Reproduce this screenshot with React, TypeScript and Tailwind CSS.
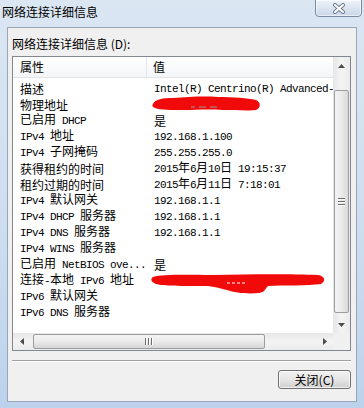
import React from 'react';

const rows: [string, string][] = [
  ['描述', 'Intel(R) Centrino(R) Advanced-'],
  ['物理地址', ''],
  ['已启用 DHCP', '是'],
  ['IPv4 地址', '192.168.1.100'],
  ['IPv4 子网掩码', '255.255.255.0'],
  ['获得租约的时间', '2015年6月10日 19:15:37'],
  ['租约过期的时间', '2015年6月11日 7:18:01'],
  ['IPv4 默认网关', '192.168.1.1'],
  ['IPv4 DHCP 服务器', '192.168.1.1'],
  ['IPv4 DNS 服务器', '192.168.1.1'],
  ['IPv4 WINS 服务器', ''],
  ['已启用 NetBIOS ove...', '是'],
  ['连接-本地 IPv6 地址', ''],
  ['IPv6 默认网关', ''],
  ['IPv6 DNS 服务器', ''],
];

// SimSun-like mix: half-width latin (6px) and full-width CJK (12px)
const Mixed: React.FC<{ text: string }> = ({ text }) => {
  const parts = text.match(/[\x20-\x7e]+|[^\x20-\x7e]+/g) || [];
  return (
    <>
      {parts.map((p, i) =>
        /^[\x20-\x7e]+$/.test(p) ? (
          <span key={i} className="font-['Liberation_Mono',monospace] text-[11px] tracking-[-0.6px] leading-[15px] whitespace-pre">
            {p}
          </span>
        ) : (
          <span key={i} className="font-['Noto_Sans_CJK_SC',sans-serif] text-[12px] leading-[15px]">
            {p}
          </span>
        )
      )}
    </>
  );
};

const Arrow: React.FC<{ dir: 'up' | 'down' | 'left' | 'right' }> = ({ dir }) => {
  const pts = {
    up: '0,4 3.5,0 7,4',
    down: '0,0 3.5,4 7,0',
    left: '4,0 0,3.5 4,7',
    right: '0,0 4,3.5 0,7',
  }[dir];
  const w = dir === 'up' || dir === 'down' ? 7 : 4;
  const h = dir === 'up' || dir === 'down' ? 4 : 7;
  return (
    <svg width={w} height={h} viewBox={`0 0 ${w} ${h}`}>
      <polygon points={pts} fill="#4d4d4d" />
    </svg>
  );
};

const Grip: React.FC<{ vertical?: boolean }> = ({ vertical }) => (
  <div className={vertical ? 'flex flex-col gap-[1px]' : 'flex gap-[1px]'}>
    {[0, 1, 2].map((i) => (
      <div
        key={i}
        className={vertical ? 'w-[7px] h-[1px] bg-[#6c6c6c] border-b border-white box-content' : 'h-[7px] w-[1px] bg-[#6c6c6c] border-r border-white box-content'}
      />
    ))}
  </div>
);

const Scribbles = () => (
  <svg className="absolute left-0 top-0 pointer-events-none" width="320" height="276" viewBox="0 0 320 276">
    {/* row 2 value (coords relative to listbox inner at x=13,y=57) */}
    <path
      d="M140 47 C142 42 150 41 160 41 C175 40 190 39 205 40 C220 40 235 41 243 43 C248 45 248 51 243 53 C235 54 222 53 210 53 C195 52 182 53 170 53 C158 53 148 53 142 51 C139 50 139 48 140 47 Z"
      fill="#f00a0a"
    />
    <path d="M178 50 L182 50 M186 50 L193 50 M197 50 L204 50" stroke="#9a9a9a" strokeWidth="1" />
    {/* row 13 value */}
    <path
      d="M140 220 C150 217 175 218 200 218 C240 217 280 217 305 218 C312 219 313 224 308 227 C295 229 270 228 255 229 C252 232 252 235 246 236 C235 237 222 236 214 233 C205 231 200 229 190 229 C170 229 150 229 143 227 C138 225 137 222 140 220 Z"
      fill="#f00a0a"
    />
    <path d="M214 226 L232 226" stroke="#ffffff" strokeWidth="1" strokeDasharray="3 2" />
  </svg>
);

const ListBox = () => (
  <div className="w-[339px] h-[295px] border border-[#828790] bg-white flex flex-col">
    <div className="flex flex-1 min-h-0">
      {/* main area */}
      <div className="w-[320px] flex flex-col relative overflow-hidden">
        <div className="h-[21px] flex bg-gradient-to-b from-white to-[#f4f5f7] border-b border-[#e0e3e8] shrink-0">
          <div className="w-[134px] border-r border-[#e3e6ea] pl-[7px] flex items-center">
            <span className="font-['Noto_Sans_CJK_SC',sans-serif] text-[12px] leading-[16px] text-black">属性</span>
          </div>
          <div className="flex-1 pl-[6px] flex items-center">
            <span className="font-['Noto_Sans_CJK_SC',sans-serif] text-[12px] leading-[16px] text-black">值</span>
          </div>
        </div>
        <div className="pt-[2px] flex flex-col">
          {rows.map(([k, v], i) => (
            <div key={i} className="h-[16px] flex items-center text-black">
              <div className="w-[135px] pl-[7px] whitespace-nowrap overflow-hidden leading-[15px]">
                <Mixed text={k} />
              </div>
              <div className="flex-1 pl-[6px] whitespace-nowrap overflow-hidden leading-[15px]">
                <Mixed text={v} />
              </div>
            </div>
          ))}
        </div>
        <Scribbles />
      </div>
      {/* vertical scrollbar */}
      <div className="w-[17px] flex flex-col bg-gradient-to-r from-[#e6e6e6] via-[#f4f4f4] to-[#ebebeb]">
        <div className="h-[17px] flex items-center justify-center">
          <Arrow dir="up" />
        </div>
        <div className="flex-1 flex flex-col pt-[16px]">
          <div className="h-[223px] mx-[1px] rounded-[2px] border border-[#9c9c9c] bg-gradient-to-r from-[#f3f3f3] via-[#ebebeb] to-[#d9d9d9] flex items-center justify-center">
            <Grip vertical />
          </div>
        </div>
        <div className="h-[17px] flex items-center justify-center">
          <Arrow dir="down" />
        </div>
      </div>
    </div>
    {/* horizontal scrollbar */}
    <div className="h-[17px] flex shrink-0">
      <div className="w-[320px] flex bg-gradient-to-b from-[#e6e6e6] via-[#f4f4f4] to-[#ebebeb]">
        <div className="w-[17px] flex items-center justify-center">
          <Arrow dir="left" />
        </div>
        <div className="flex-1 flex items-stretch pl-[3px] py-[1px]">
          <div className="w-[232px] rounded-[2px] border border-[#9c9c9c] bg-gradient-to-b from-[#f3f3f3] via-[#ebebeb] to-[#d6d6d6] flex items-center justify-center">
            <Grip />
          </div>
        </div>
        <div className="w-[17px] flex items-center justify-center">
          <Arrow dir="right" />
        </div>
      </div>
      <div className="w-[17px] bg-[#f0f0f0]" />
    </div>
  </div>
);

const CloseX = () => (
  <svg width="14" height="11" viewBox="0 0 14 11">
    <path d="M3 2 L11 9 M11 2 L3 9" stroke="#6f7c8e" strokeWidth="4" strokeLinecap="round" />
    <path d="M3 2 L11 9 M11 2 L3 9" stroke="#ffffff" strokeWidth="2" strokeLinecap="round" />
  </svg>
);

export default function App() {
  return (
    <div className="w-[364px] h-[408px] flex flex-col overflow-hidden bg-gradient-to-b from-[#dbe6f3] via-[#cfdff0] to-[#bcd2ec]">
      <div className="h-[27px] flex items-start justify-between shrink-0">
        <span className="pl-[2px] pt-[3px] font-['Noto_Sans_CJK_SC',sans-serif] text-[12px] leading-[18px] text-black">
          网络连接详细信息
        </span>
        <div className="mr-[2px] w-[47px] h-[18px] -mt-[1px] rounded-b-[4px] border border-[#7a8aa0] bg-gradient-to-b from-[#eef3f9] to-[#c9d7e9] flex items-center justify-center shadow-[inset_0_0_0_1px_rgba(255,255,255,0.6)]">
          <CloseX />
        </div>
      </div>
      <div className="flex-1 mx-[7px] mb-[6px] bg-[#f0f0f0] border border-[#98a6b8] flex flex-col pl-[4px] pt-[8px]">
        <div className="h-[16px] leading-[16px] font-['Noto_Sans_CJK_SC',sans-serif] text-[12px] text-black">
          网络连接详细信息 (D):
        </div>
        <div className="mt-[4px]">
          <ListBox />
        </div>
        <div className="mt-[9px] w-[339px] h-[2px] border-t border-[#a0a0a0] border-b border-b-white" />
        <div className="mt-[8px] self-end mr-[5px] w-[73px] h-[19px] rounded-[3px] border border-[#707070] bg-gradient-to-b from-[#f2f2f2] via-[#e6e6e6] to-[#cfcfcf] flex items-center justify-center shadow-[inset_0_0_0_1px_rgba(255,255,255,0.7)]">
          <span className="font-['Noto_Sans_CJK_SC',sans-serif] text-[12px] leading-[16px] text-black">关闭(C)</span>
        </div>
      </div>
    </div>
  );
}
